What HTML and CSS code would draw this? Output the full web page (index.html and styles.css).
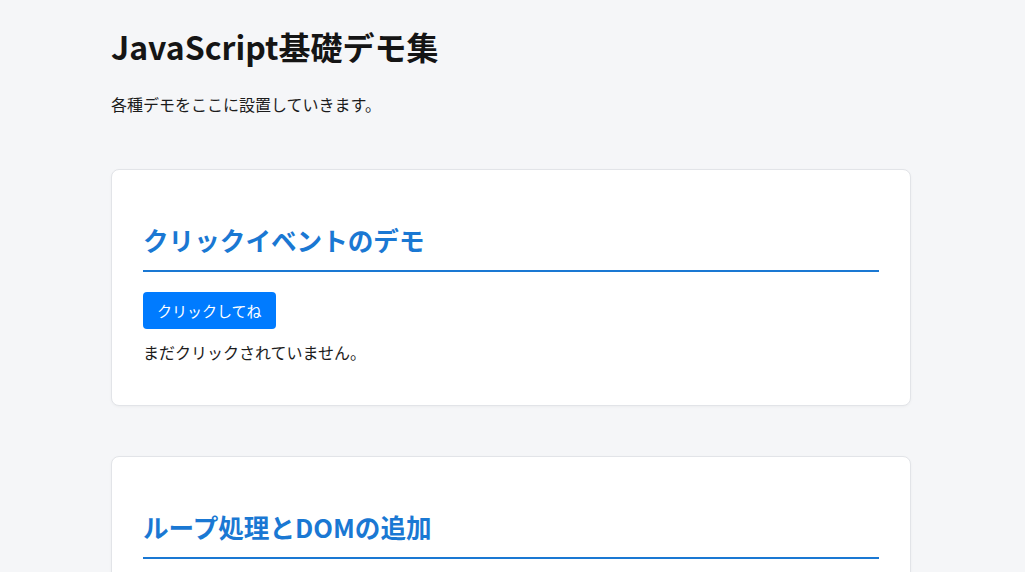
FILE: index.html
```html
<!DOCTYPE html>
<html lang="ja">
<head>
<meta charset="utf-8">
<title>JavaScript基礎デモ集</title>
<link rel="stylesheet" href="styles.css">
</head>
<body>
<div class="page">
  <h1 class="title">JavaScript基礎デモ集</h1>
  <p class="lead">各種デモをここに設置していきます。</p>

  <section class="card">
    <h2 class="card-title">クリックイベントのデモ</h2>
    <button class="btn" type="button">クリックしてね</button>
    <p class="result">まだクリックされていません。</p>
  </section>

  <section class="card">
    <h2 class="card-title">ループ処理とDOMの追加</h2>
    <button class="btn" type="button">リストを作成</button>
    <ul class="list"></ul>
  </section>
</div>
</body>
</html>
```

FILE: styles.css
```css
html, body {
  margin: 0;
  padding: 0;
}
body {
  background: #f5f6f8;
  color: #1c1c1c;
  font-family: "Noto Sans CJK JP", "Noto Sans", sans-serif;
  font-size: 16px;
  line-height: 1.6;
  padding-right: 3px;
}
.page {
  max-width: 800px;
  margin: 0 auto;
  padding-top: 23px;
}
.title {
  margin: 0;
  font-size: 32px;
  line-height: normal;
  font-weight: 700;
  color: #151515;
}
.lead {
  margin: 23px 0 0;
}
.card {
  background: #fff;
  border: 1px solid #e2e4e8;
  border-radius: 8px;
  box-shadow: 0 1px 3px rgba(0,0,0,0.04);
  padding: 32px 31px;
  margin-bottom: 50px;
}
.lead + .card {
  margin-top: 51px;
}
.card-title {
  margin: 19px 0 20px;
  font-size: 25.6px;
  line-height: 38px;
  font-weight: 700;
  color: #1a78d3;
  padding-bottom: 11px;
  border-bottom: 2px solid #1a78d3;
}
.btn {
  display: block;
  background: #007bff;
  color: #fff;
  border: none;
  border-radius: 4px;
  font-family: inherit;
  font-size: 15px;
  line-height: 21px;
  height: 37px;
  padding: 8px 14px;
  margin: 0 0 11px;
  cursor: pointer;
}
.result {
  margin: 0 0 8px;
}
.list {
  margin: 0;
}
```
